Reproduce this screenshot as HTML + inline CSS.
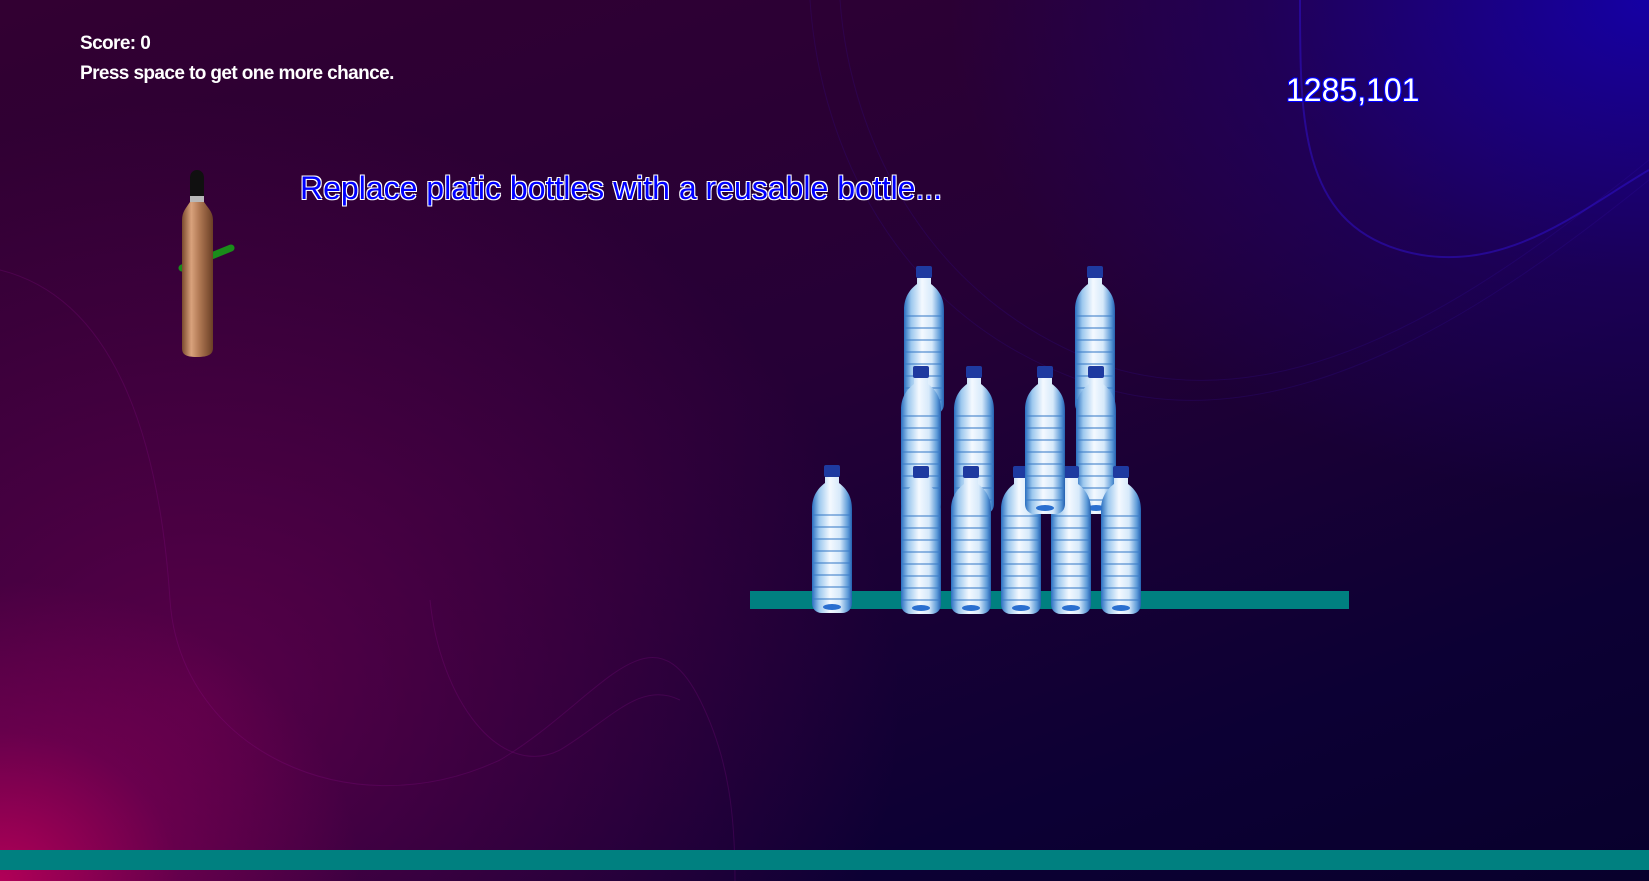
<!DOCTYPE html>
<html><head><meta charset="utf-8"><style>
html,body{margin:0;padding:0;width:1649px;height:881px;overflow:hidden}
body{position:relative;font-family:"Liberation Sans",Arial,sans-serif;
background:
radial-gradient(ellipse 360px 300px at 0px 881px,rgba(190,0,90,0.9),rgba(150,0,90,0.4) 50%,rgba(120,0,80,0) 100%),
radial-gradient(ellipse 700px 500px at 1649px 0px,rgba(20,0,170,0.95),rgba(25,0,120,0.5) 55%,rgba(20,0,100,0) 100%),
radial-gradient(ellipse 700px 600px at 200px 700px,rgba(110,0,80,0.7),rgba(90,0,70,0) 100%),
linear-gradient(160deg,#320032 0%,#250036 45%,#0c0034 80%,#08002c 100%);}
.t{position:absolute;white-space:nowrap}
</style></head><body>
<svg width="1649" height="881" style="position:absolute;left:0;top:0">
<defs>
<linearGradient id="bw" x1="0" x2="1">
<stop offset="0" stop-color="#2a6fc0"/><stop offset=".18" stop-color="#9cc8ee"/><stop offset=".45" stop-color="#f4f9ff"/><stop offset=".7" stop-color="#d6e9fa"/><stop offset=".9" stop-color="#5c9ad8"/><stop offset="1" stop-color="#2460b0"/></linearGradient>
<linearGradient id="cu" x1="0" x2="1">
<stop offset="0" stop-color="#7a4a2e"/><stop offset=".3" stop-color="#d9a27c"/><stop offset=".55" stop-color="#b27a55"/><stop offset="1" stop-color="#6a3e25"/></linearGradient>
<g id="b">
<rect x="13" y="0" width="16" height="12" rx="2" fill="#1e3aa0"/>
<path d="M14 12h14v6c8 6 13 14 13 26v94c0 6-4 10-10 10H11C5 148 1 144 1 138V44c0-12 5-20 13-26z" fill="url(#bw)"/>
<g stroke="#3a7cc8" stroke-width="1.6" fill="none" opacity=".7">
<path d="M2 50h38M2 62h38M2 74h38M2 86h38M2 98h38M2 110h38M2 122h38M2 134h38"/></g>
<ellipse cx="21" cy="142" rx="9" ry="3" fill="#2a6fd0"/>
</g>
</defs>
<g fill="none" stroke="#3a10b0" stroke-opacity=".2">
<path d="M810 0C820 150 900 330 1110 390C1300 440 1500 300 1649 180"/>
<path d="M840 0C850 140 930 310 1120 370C1310 420 1500 280 1649 160"/>
<path d="M1300 0C1300 120 1300 220 1400 250C1500 280 1580 210 1649 170" stroke="#3010d0" stroke-opacity=".5" stroke-width="2"/>
</g>
<g fill="none" stroke="#a010a0" stroke-opacity=".2">
<path d="M0 270C120 300 160 450 170 600C180 750 350 830 500 760C600 700 650 600 700 700C730 760 735 820 735 881"/>
<path d="M430 600C440 700 500 780 560 750C610 720 640 680 680 700"/>
</g>
<rect x="750" y="591" width="599" height="18" fill="#008080"/>
<rect x="0" y="850" width="1649" height="20" fill="#008080"/>
<line x1="182" y1="268" x2="231" y2="248" stroke="#1a8c1a" stroke-width="7" stroke-linecap="round"/>
<path d="M190 178c0-5 3-8 7-8s7 3 7 8v19h-14z" fill="#101010"/>
<rect x="190" y="196" width="14" height="6" fill="#b8b8b8"/>
<path d="M190 202h14c4 6 9 10 9 18v128c0 6-4 9-16 9s-15-3-15-9V220c0-8 4-12 8-18z" fill="url(#cu)"/>
<use href="#b" x="903" y="266"/>
<use href="#b" x="1074" y="266"/>
<use href="#b" x="900" y="366"/>
<use href="#b" x="953" y="366"/>
<use href="#b" x="1075" y="366"/>
<use href="#b" x="811" y="465"/>
<use href="#b" x="900" y="466"/>
<use href="#b" x="950" y="466"/>
<use href="#b" x="1000" y="466"/>
<use href="#b" x="1050" y="466"/>
<use href="#b" x="1100" y="466"/>
<use href="#b" x="1024" y="366"/>
</svg>
<div class="t" style="left:80px;top:33px;color:#fff;font-size:19px;font-weight:bold;letter-spacing:-0.6px">Score: 0</div>
<div class="t" style="left:80px;top:63px;color:#fff;font-size:19px;font-weight:bold;letter-spacing:-0.6px">Press space to get one more chance.</div>
<div class="t" style="left:1286px;top:72px;color:#fff;font-size:32px;text-shadow:0 0 2px #00f,1px 1px 0 #00f,-1px -1px 0 #00f,1px -1px 0 #00f,-1px 1px 0 #00f">1285,101</div>
<div class="t" style="left:300px;top:170px;color:#00f;font-size:32px;text-shadow:1px 1px 0 #fff,-1px -1px 0 #fff,1px -1px 0 #fff,-1px 1px 0 #fff">Replace platic bottles with a reusable bottle...</div>
</body></html>
